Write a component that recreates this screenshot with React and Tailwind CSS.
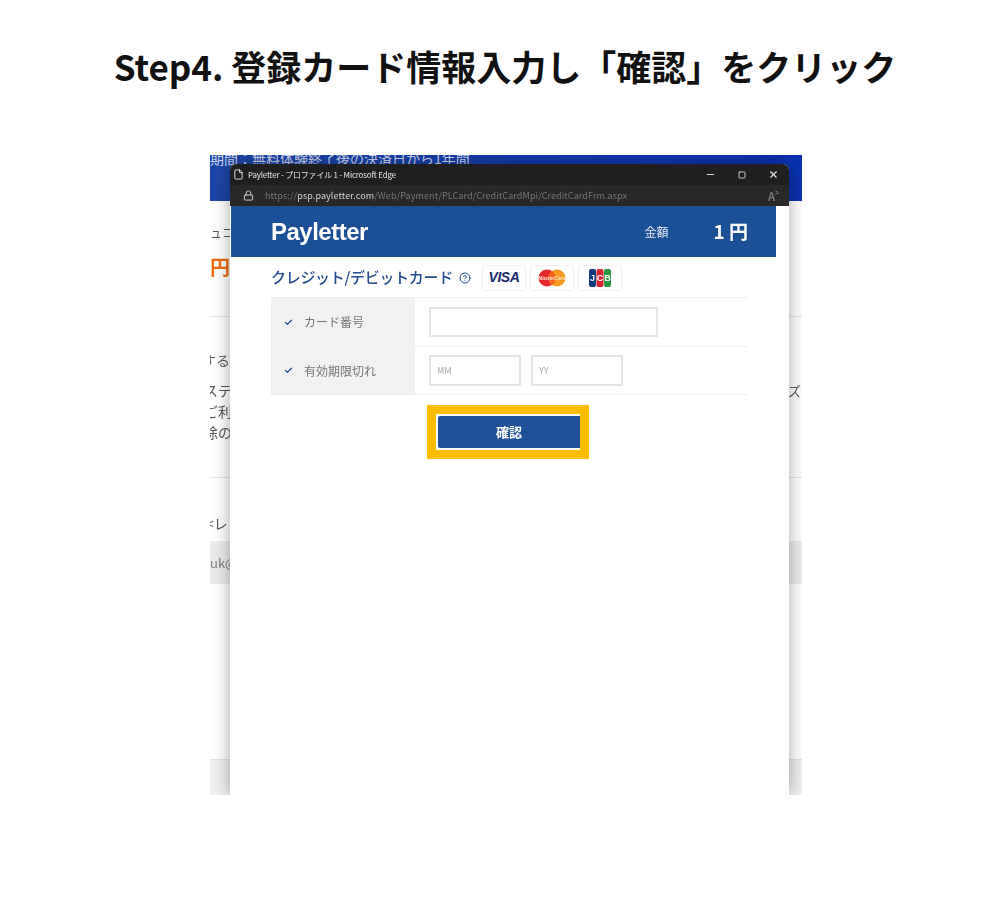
import { File, Lock, Minus, Square, X, Check, CircleHelp } from 'lucide-react'

const jp = 'font-["Noto_Sans_CJK_JP","Noto_Sans",sans-serif]'

function CardBadge({ children }) {
  return (
    <div className="w-[44px] h-[26px] bg-white border border-[#eeeeee] rounded-[3px] flex items-center justify-center">
      {children}
    </div>
  )
}

function MasterLogo() {
  return (
    <svg width="28" height="18" viewBox="0 0 28 18">
      <circle cx="9" cy="9" r="8.5" fill="#e5262a" />
      <circle cx="19" cy="9" r="8.5" fill="#f79a1f" />
      <path d="M14 2a8.5 8.5 0 0 1 0 14a8.5 8.5 0 0 1 0-14z" fill="#f2641f" />
      <text x="14" y="11" textAnchor="middle" fontSize="5" fontWeight="700" fontStyle="italic" fill="#fbe3d0" fontFamily="Liberation Sans">MasterCard</text>
    </svg>
  )
}

function JcbLogo() {
  return (
    <svg width="22" height="18" viewBox="0 0 22 18">
      <rect x="0" y="0" width="7" height="18" rx="2" fill="#12387f" />
      <rect x="7.5" y="0" width="7" height="18" rx="2" fill="#d8232f" />
      <rect x="15" y="0" width="7" height="18" rx="2" fill="#2b9a3f" />
      <text x="3.5" y="12" textAnchor="middle" fontSize="9" fontWeight="700" fill="#ffffff" fontFamily="Liberation Sans">J</text>
      <text x="11" y="12" textAnchor="middle" fontSize="9" fontWeight="700" fill="#ffffff" fontFamily="Liberation Sans">C</text>
      <text x="18.5" y="12" textAnchor="middle" fontSize="9" fontWeight="700" fill="#ffffff" fontFamily="Liberation Sans">B</text>
    </svg>
  )
}

function ReadAloudIcon() {
  return (
    <span className="ml-auto flex items-start text-[#777777]">
      <span className="text-[11px] leading-[12px] font-semibold">A</span>
      <svg width="4" height="6" viewBox="0 0 4 6" fill="none" stroke="currentColor" strokeWidth="1">
        <path d="M0.5 1l3 1.5M0.5 4l3-1" />
      </svg>
    </span>
  )
}

function FormRow({ label, tall, children }) {
  return (
    <div className={`flex border-b border-[#eeeeee] ${tall ? 'h-[49px]' : 'h-[48px]'}`}>
      <div className="w-[144px] bg-[#f1f1f1] flex items-center pl-[13px] gap-[11px]">
        <Check size={9} strokeWidth={3.5} className="text-[#1f5199]" />
        <span className="text-[12px] text-[#777777]">{label}</span>
      </div>
      <div className="flex-1 flex items-center pl-[14px] gap-[10px]">{children}</div>
    </div>
  )
}

function DateInput({ text }) {
  return (
    <div className="w-[92px] h-[31px] border-2 border-[#e4e4e4] flex items-center pl-[6px] text-[9px] text-[#aaaaaa]">
      {text}
    </div>
  )
}

function BehindPage() {
  return (
    <div className="absolute inset-0 flex flex-col text-[#555555] text-[14px] whitespace-nowrap">
      <div className="h-[46px] bg-gradient-to-r from-[#1c47a8] to-[#0a32b2] overflow-hidden">
        <div className="text-[14px] leading-[12px] text-[#cdd7f2] -mt-[3px]">
          期間：無料体験終了後の決済日から1年間
        </div>
      </div>
      <div className="h-[20px] mt-[22px] leading-[20px] text-[12px]">ュコ</div>
      <div className="h-[28px] mt-[10px] leading-[28px] text-[20px] font-bold text-[#f26a12]">円/</div>
      <div className="h-px mt-[35px] bg-[#e4e4e4]" />
      <div className="h-[20px] mt-[33px] leading-[20px] -ml-[8px]">する</div>
      <div className="h-[21px] mt-[10px] leading-[21px] flex justify-between -ml-[6px]">
        <span>ステ</span>
        <span className="mr-[1px] text-[13px]">ズ</span>
      </div>
      <div className="h-[21px] leading-[21px] -ml-[6px]">ご利</div>
      <div className="h-[21px] leading-[21px] -ml-[6px]">除の</div>
      <div className="h-px mt-[34px] bg-[#e4e4e4]" />
      <div className="h-[20px] mt-[35px] leading-[20px] -ml-[4px]">&lt;レ</div>
      <div className="h-[43px] mt-[8px] bg-[#ececec] flex items-center text-[13px] text-[#808080]">uk@</div>
      <div className="h-px mt-[175px] bg-[#e4e4e4]" />
      <div className="flex-1 bg-[#f0f0f0]" />
    </div>
  )
}

function PopupWindow() {
  return (
    <div className="absolute left-[20px] top-[9px] bottom-0 w-[559px] bg-white shadow-[0_0_18px_rgba(0,0,0,0.35)] rounded-t-[6px] flex flex-col">
      <div className="h-[21px] bg-[#1f1f1f] rounded-t-[6px] flex items-center pl-[3px] text-[#e8e8e8]">
        <File size={11} />
        <span className="ml-[4px] text-[8px] tracking-[-0.2px] whitespace-nowrap">Payletter - プロファイル 1 - Microsoft Edge</span>
        <div className="ml-auto flex items-center gap-[22px] pr-[10px]">
          <Minus size={11} />
          <Square size={8} strokeWidth={2.5} />
          <X size={11} strokeWidth={2.5} />
        </div>
      </div>
      <div className="h-[21px] bg-[#282828] flex items-center pl-[13px] pr-[10px]">
        <Lock size={11} className="text-[#d8d8d8]" />
        <span className="ml-[11px] text-[9px] tracking-[0.1px] text-[#777777] whitespace-nowrap">
          https://<span className="text-[#d4d4d4]">psp.payletter.com</span>/Web/Payment/PLCard/CreditCardMpi/CreditCardFrm.aspx
        </span>
        <ReadAloudIcon />
      </div>
      <div className="h-[51px] ml-px mr-[13px] bg-[#1c5096] flex items-center pl-[40px] pr-[28px] text-white">
        <span className="text-[24px] font-semibold tracking-[-0.5px] font-['Liberation_Sans',sans-serif]">Payletter</span>
        <span className="ml-auto text-[12px] text-[#e4e9f2]">金額</span>
        <span className="ml-[45px] text-[19px] font-bold">1 円</span>
      </div>
      <div className="px-[41px]">
        <div className="flex items-center h-[41px] pt-[1px] border-b border-[#eeeeee]">
          <span className="text-[15px] font-medium text-[#1f4a8f] tracking-[-0.3px] whitespace-nowrap">クレジット/デビットカード</span>
          <CircleHelp size={12} strokeWidth={2} className="ml-[6px] text-[#1f4a8f]" />
          <div className="ml-[11px] flex gap-[4px]">
            <CardBadge>
              <span className="font-['Liberation_Sans',sans-serif] text-[14px] font-bold italic text-[#1a2a6c] tracking-[-0.5px]">VISA</span>
            </CardBadge>
            <CardBadge><MasterLogo /></CardBadge>
            <CardBadge><JcbLogo /></CardBadge>
          </div>
        </div>
        <FormRow label="カード番号" tall>
          <div className="w-[229px] h-[30px] border-2 border-[#e4e4e4]" />
        </FormRow>
        <FormRow label="有効期限切れ">
          <DateInput text="MM" />
          <DateInput text="YY" />
        </FormRow>
        <div className="flex justify-center pt-[10px] pr-[3px]">
          <div className="w-[162px] h-[54px] bg-[#fdbd00] pl-[9px] pr-[9px] py-[9px]">
            <div className="h-[36px] bg-white pl-[2px] py-[2px]">
              <div className="h-[32px] bg-[#1f5199] rounded-l-[2px] flex items-center justify-center text-[13px] font-bold text-white">
                確認
              </div>
            </div>
          </div>
        </div>
      </div>
    </div>
  )
}

export default function App() {
  return (
    <div className={`w-full min-h-[912px] bg-white flex flex-col items-center ${jp}`}>
      <h1 className="mt-[37px] ml-[10px] h-[58px] leading-[58px] text-[35px] font-semibold text-[#111111] whitespace-nowrap">
        Step4. 登録カード情報入力し「確認」をクリック
      </h1>
      <div className="relative mt-[60px] ml-[12px] w-[592px] h-[640px] overflow-hidden blur-[0.3px]">
        <BehindPage />
        <PopupWindow />
      </div>
    </div>
  )
}
